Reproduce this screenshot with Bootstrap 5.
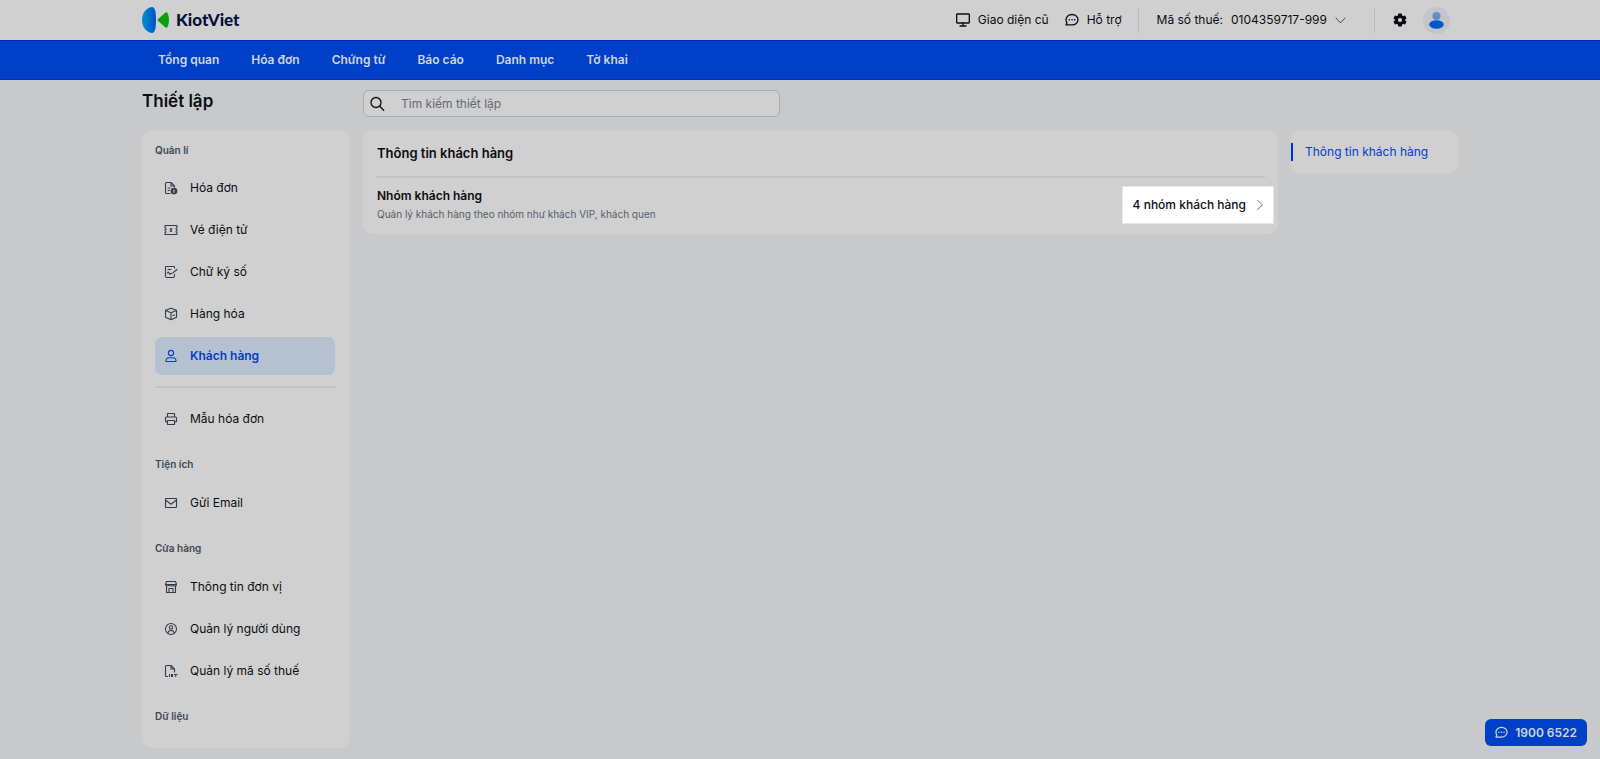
<!DOCTYPE html>
<html lang="vi">
<head>
<meta charset="utf-8">
<meta name="viewport" content="width=device-width, initial-scale=1">
<title>KiotViet - Thiết lập</title>
<link href="https://cdn.jsdelivr.net/npm/bootstrap@5.3.0/dist/css/bootstrap.min.css" rel="stylesheet">
<style>
body{background:#c8c9cb;color:#0b0d12;font-family:Inter,"Liberation Sans",sans-serif;font-size:12px;line-height:20px}
a{color:inherit;text-decoration:none}
svg{display:block;flex:none}
.line-icon{fill:none;stroke:currentColor;stroke-linecap:round;stroke-linejoin:round}
.wrap{max-width:1340px;padding:0 12px}
.topbar{background:#d0d0d0;min-height:40px}
.brand{gap:6px}
.brand-name{font:900 17px/24px Lato,sans-serif;color:#06113a}
.top-tools{padding-right:8px}
.top-tools .btn{font-size:12px;line-height:20px}
.rule-v{width:1px;height:25px;background:#b9bbbf}
.tax-btn{margin:0 28px 0 2px}
.gear-btn{margin:0 16px 0 18px}
.chev{color:#4a4e54}
.avatar{width:27px;height:27px;background:#c3c5c8}
.mainnav{background:#0040c8;border-top:1px solid #0026c4;border-bottom:1px solid #0032b4;min-height:40px}
.mainnav a{color:#d0d4dc;font-weight:600}
.mainnav .wrap{padding-left:28px;gap:32px}
.gap-13{gap:13px}
.side-col{width:208px;flex:none}
.toc-col{width:167px;flex:none;padding:13px 0}
.page-title{font-size:17px;line-height:22px;font-weight:600;margin:0}
.search-box{width:417px;height:27px;border:1px solid #a9adb1;border-radius:6px;background:#d0d0d0}
.search-box input{background:transparent;border:0;outline:0;color:#0b0d12;padding:0 0 0 15px}
.search-box input::placeholder{color:#606a74;opacity:1}
.panel{background:#d0d0d0;border-radius:10px}
.side-panel{padding:10px 15px 22px 13px}
.group-label{font-size:10px;line-height:20px;font-weight:600;color:#3c4853;margin:16px 0 10px}
.group-label:first-child{margin:0 0 9px}
.side-link{height:38px;border-radius:7px;padding-left:9px;gap:12px}
.side-link svg{color:#333d48;stroke-width:1.1}
.side-link.active{background:#b5c1d0;color:#0040c8;font-weight:600}
.side-link.active svg{color:#0040c8}
.rule-h{height:2px;background:#c2c3c4;margin:0;border:0;opacity:1}
.side-panel .rule-h{margin:11px 0 12px}
.info-panel{padding:13px 13px 10px}
.info-text{padding-left:1px}
.info-title{font-size:13px;line-height:20px;font-weight:600;margin:0 0 13px;padding-left:1px}
.info-name{font-size:12px;line-height:18px;font-weight:600;margin:0}
.info-desc{font-size:10px;line-height:18px;color:#56606b;margin:0}
.group-btn{height:38px;background:#fff;border:1px solid #e6e6e6;padding:0 9px 0 10px;gap:10px;margin-right:-9px;font-weight:500;color:#0b0d12}
.group-btn svg{color:#777}
.toc-link{color:#0040c8;height:18px;line-height:18px;border-left:2px solid #0030d0;padding-left:12px}
.hotline{right:13px;bottom:13px;height:27px;background:#0040c8;color:#d0d4dc;border:0;border-radius:6px;padding:0 10px;gap:7px;font-weight:600}
</style>
</head>
<body>
<svg width="0" height="0" class="position-absolute" aria-hidden="true">
<symbol id="chat" viewBox="0 0 14 14"><path d="M7 1.500c3.400 0 6 2.300 6 5.200s-2.600 5.200-6 5.200H1l1-2.100C1.300 8.900 1 7.800 1 6.700c0-2.900 2.600-5.200 6-5.200z"/><path d="M4.200 6.700h.1M7 6.700h.1M9.700 6.700h.1" stroke-width="1.600"/></symbol>
</svg>
<header class="topbar d-flex">
<div class="wrap container-fluid d-flex align-items-center justify-content-between">
<a href="#" class="brand d-flex align-items-center">
<svg width="28" height="28" viewBox="0 0 28 28"><defs><linearGradient id="lg"><stop offset="0" stop-color="#0093cc"/><stop offset="1" stop-color="#0050cc"/></linearGradient></defs><path d="M10 1c3 0 4 5 4 13s-1 13-4 13C4 26 0 21 0 14S4 2 10 1z" fill="url(#lg)"/><path d="M16 13l7-6c1-1 2-1 2.500 0 2 4 2 10 0 14-.5 1-1.500 1-2.500 0l-7-6q-1-1 0-2z" fill="#08a20c"/></svg>
<span class="brand-name">KiotViet</span></a>
<div class="top-tools d-flex align-items-center">
<a href="#" class="d-flex align-items-center gap-2"><svg class="line-icon" width="14" height="14" viewBox="0 0 14 14" stroke-width="1.300"><rect x=".7" y="1" width="12.600" height="9" rx=".5"/><path d="M7 10v3M4 13h6"/></svg>Giao diện cũ</a>
<a href="#" class="d-flex align-items-center gap-2 ms-3"><svg class="line-icon" width="14" height="14" stroke-width="1.300"><use href="#chat"/></svg>Hỗ trợ</a>
<span class="rule-v mx-3"></span>
<button type="button" class="btn tax-btn p-0 border-0 d-flex align-items-center text-reset"><span>Mã số thuế:</span><span class="ms-2 me-2">0104359717-999</span><svg class="line-icon chev" width="11" height="11" viewBox="0 0 11 11"><path d="M1 3l4.500 5L10 3"/></svg></button>
<span class="rule-v"></span>
<button type="button" class="btn gear-btn p-0 border-0" aria-label="Cài đặt"><svg width="14" height="14" viewBox="0 0 14 14"><path fill="#0b0d12" fill-rule="evenodd" d="M5.300.5h3.400l.4 1.900 1 .6 1.900-.6 1.600 2.800-1.400 1.300v1l1.400 1.300-1.600 2.800-1.900-.6-1 .6-.4 1.900H5.300L4.900 11.600l-1-.6-1.900.6L.4 8.800l1.400-1.300v-1L.4 5.200 2 2.400l1.900.6 1-.6zM7 4.900a2.100 2.100 0 100 4.200 2.100 2.100 0 000-4.200z"/></svg></button>
<button type="button" class="btn p-0 border-0 avatar rounded-circle" aria-label="Tài khoản"><svg width="27" height="27" viewBox="0 0 27 27"><circle cx="13.500" cy="9" r="4" fill="#6090cc"/><ellipse cx="13.500" cy="17.500" rx="7.300" ry="4.200" fill="#0058cc"/></svg></button>
</div>
</div>
</header>
<nav class="mainnav d-flex"><div class="wrap container-fluid d-flex align-items-center">
<a href="#">Tổng quan</a><a href="#">Hóa đơn</a><a href="#">Chứng từ</a><a href="#">Báo cáo</a><a href="#">Danh mục</a><a href="#">Tờ khai</a>
</div></nav>
<div class="wrap container-fluid">
<div class="d-flex gap-13" style="padding-top:10px">
<h1 class="page-title side-col">Thiết lập</h1>
<label class="search-box d-flex align-items-center"><svg class="line-icon ms-1" width="18" height="18" viewBox="0 0 18 18" stroke-width="1.300"><circle cx="8" cy="7.500" r="5"/><path d="M11.700 11.200l4 4"/></svg><input class="flex-fill" type="search" placeholder="Tìm kiếm thiết lập" aria-label="Tìm kiếm thiết lập"></label>
</div>
<div class="d-flex align-items-start gap-13" style="padding-top:13px">
<aside class="panel side-panel side-col">
<h2 class="group-label">Quản lí</h2>
<div class="d-flex flex-column gap-1">
<a href="#" class="side-link d-flex align-items-center"><svg class="line-icon" width="14" height="14" viewBox="0 0 14 14"><path d="M6 12.500H2.500q-1 0-1-1v-9q0-1 1-1H7L10.500 5v1M7 1.500V5h3.500M4 7h2M4 9.500h1.500"/><circle cx="10" cy="10" r="2.800" fill="currentColor"/><path d="M10 8.700v2.600" stroke="#d0d0d0"/></svg>Hóa đơn</a>
<a href="#" class="side-link d-flex align-items-center"><svg class="line-icon" width="14" height="14" viewBox="0 0 14 14"><path d="M1 2.500h12v2.300q-1 .2-1 1t1 1v1q-1 .2-1 1t1 1v1.700H1V9.800q1-.2 1-1t-1-1v-1q1-.2 1-1t-1-1z"/><path d="M8 5.700H6.600q-.7.700.4 1.300t.4 1.300H6"/></svg>Vé điện tử</a>
<a href="#" class="side-link d-flex align-items-center"><svg class="line-icon" width="14" height="14" viewBox="0 0 14 14"><path d="M10.500 3V2q0-.5-.5-.5H2q-.5 0-.5.500v9q0 1.500 1.500 1.500h6q1.500 0 1.500-1.500V9.500M4 4.500h3M3.500 8q1-2 1.500 0t2 .5l1.500-.3L13 4.500"/></svg>Chữ ký số</a>
<a href="#" class="side-link d-flex align-items-center"><svg class="line-icon" width="14" height="14" viewBox="0 0 14 14"><path d="M7 1.200l5.500 2v7L7 12.800l-5.500-2.600v-7zM1.500 3.500L7 5.700l5.500-2.200M7 5.700v7M9 8.500l1.500-.6"/></svg>Hàng hóa</a>
<a href="#" class="side-link active d-flex align-items-center" aria-current="page"><svg class="line-icon" width="14" height="14" viewBox="0 0 14 14"><circle cx="7" cy="4" r="2.600"/><path d="M2 12.500q-.2-3.700 3-3.700h4q3.200 0 3 3.700z"/></svg>Khách hàng</a>
</div>
<hr class="rule-h">
<a href="#" class="side-link d-flex align-items-center"><svg class="line-icon" width="14" height="14" viewBox="0 0 14 14"><path d="M3.500 5V1.500h7V5M3.500 10h-1q-1 0-1-1V6q0-1 1-1h9q1 0 1 1v3q0 1-1 1h-1M3.500 8.500h7v4h-7z"/></svg>Mẫu hóa đơn</a>
<h2 class="group-label">Tiện ích</h2>
<a href="#" class="side-link d-flex align-items-center"><svg class="line-icon" width="14" height="14" viewBox="0 0 14 14"><rect x="1.500" y="2.500" width="11" height="9" rx=".5"/><path d="M1.500 4L7 8.300 12.500 4"/></svg>Gửi Email</a>
<h2 class="group-label">Cửa hàng</h2>
<div class="d-flex flex-column gap-1">
<a href="#" class="side-link d-flex align-items-center"><svg class="line-icon" width="14" height="14" viewBox="0 0 14 14"><path d="M2.500 1.500h9l1 3q0 1.500-1.800 1.500T9 4.800Q9 6 7 6T5 4.800Q5 6 3.300 6T1.500 4.500zM1.500 4.500h11M2.500 6v6.500h9V6M5 12.500v-4h4v4"/></svg>Thông tin đơn vị</a>
<a href="#" class="side-link d-flex align-items-center"><svg class="line-icon" width="14" height="14" viewBox="0 0 14 14"><circle cx="7" cy="7" r="5.500"/><circle cx="7" cy="5.500" r="1.700"/><path d="M4 10.500q.5-2 3-2t3 2"/></svg>Quản lý người dùng</a>
<a href="#" class="side-link d-flex align-items-center"><svg class="line-icon" width="14" height="14" viewBox="0 0 14 14"><path d="M3.500 12.500h-1q-1 0-1-1v-9q0-1 1-1H7L10.500 5v3M7 1.500V5h3.500M5.500 10.500v2M7.500 12.500v-2h1v2M10.500 10.500h2.500M11.700 10.500v2"/></svg>Quản lý mã số thuế</a>
</div>
<h2 class="group-label mb-0">Dữ liệu</h2>
</aside>
<main class="panel info-panel flex-fill">
<h2 class="info-title">Thông tin khách hàng</h2>
<hr class="rule-h">
<div class="d-flex justify-content-between align-items-center pt-2">
<div class="info-text"><h3 class="info-name">Nhóm khách hàng</h3><p class="info-desc">Quản lý khách hàng theo nhóm như khách VIP, khách quen</p></div>
<button type="button" class="group-btn d-flex align-items-center">4 nhóm khách hàng<svg class="line-icon" width="8" height="12" viewBox="0 0 8 12"><path d="M1.500 1.500L6.500 6l-5 4.500"/></svg></button>
</div>
</main>
<nav class="panel toc-col"><a class="toc-link d-block" href="#">Thông tin khách hàng</a></nav>
</div>
</div>
<button type="button" class="hotline position-fixed d-flex align-items-center"><svg class="line-icon" width="13" height="13" stroke-width="1.300"><use href="#chat"/></svg>1900 6522</button>
</body>
</html>
